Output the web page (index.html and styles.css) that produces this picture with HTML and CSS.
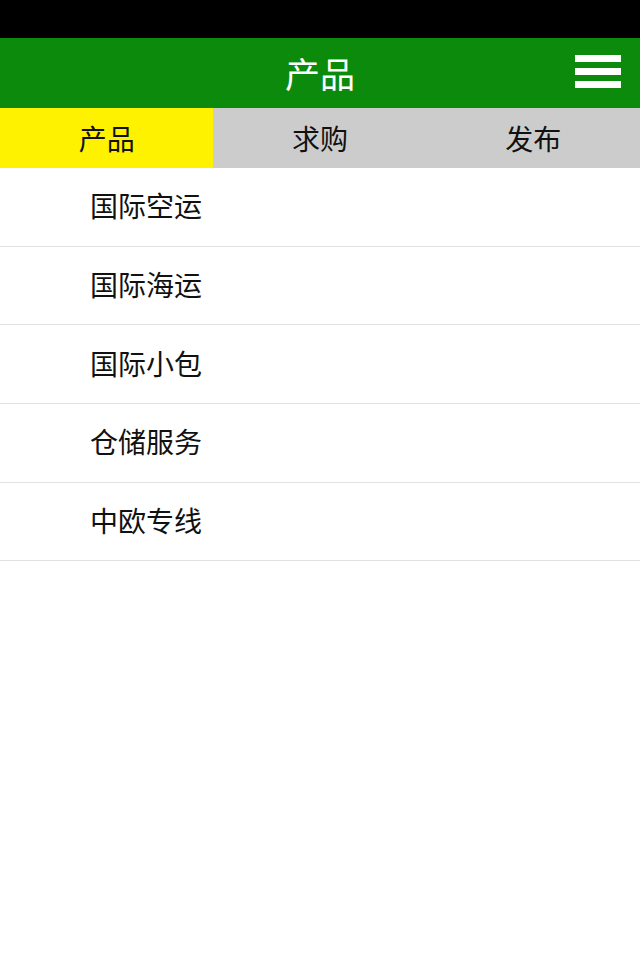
FILE: index.html
```html
<!DOCTYPE html>
<html lang="zh-CN">
<head>
<meta charset="utf-8">
<title>产品</title>
<link rel="stylesheet" href="styles.css">
</head>
<body>
<div class="status"></div>
<header class="topbar">
  <h1 class="title">产品</h1>
  <div class="menu" aria-label="菜单">
    <span class="bar"></span><span class="bar"></span><span class="bar"></span>
  </div>
</header>
<nav class="tabs">
  <div class="tab active">产品</div>
  <div class="tab">求购</div>
  <div class="tab">发布</div>
</nav>
<ul class="list">
  <li class="item">国际空运</li>
  <li class="item">国际海运</li>
  <li class="item">国际小包</li>
  <li class="item">仓储服务</li>
  <li class="item">中欧专线</li>
</ul>
</body>
</html>
```

FILE: styles.css
```css
html, body {
  margin: 0;
  padding: 0;
  background: #ffffff;
  font-family: "Noto Sans CJK SC", "Noto Sans", sans-serif;
}
.status {
  height: 38px;
  background: #000000;
}
.topbar {
  height: 70px;
  background: #0b8a0b;
  display: flex;
  align-items: center;
  justify-content: center;
  position: relative;
}
.title {
  margin: 0 0 2px;
  color: #ffffff;
  font-size: 35px;
  font-weight: normal;
  line-height: 1;
}
.menu {
  position: absolute;
  right: 19px;
  top: 17px;
  width: 46px;
  display: flex;
  flex-direction: column;
  gap: 6px;
}
.bar {
  display: block;
  height: 7px;
  background: #ffffff;
}
.tabs {
  display: grid;
  grid-template-columns: 1fr 1fr 1fr;
  height: 60px;
  background: #cccccc;
}
.tab {
  display: flex;
  align-items: center;
  justify-content: center;
  padding-bottom: 1px;
  font-size: 28px;
  color: #111111;
}
.tab.active {
  background: #fff200;
}
.list {
  list-style: none;
  margin: 0;
  padding: 0;
}
.item {
  box-sizing: border-box;
  height: 78.7px;
  border-bottom: 1px solid #e2e2e2;
  display: flex;
  align-items: center;
  padding-left: 90px;
  padding-bottom: 3px;
  font-size: 28px;
  color: #111111;
}
```
